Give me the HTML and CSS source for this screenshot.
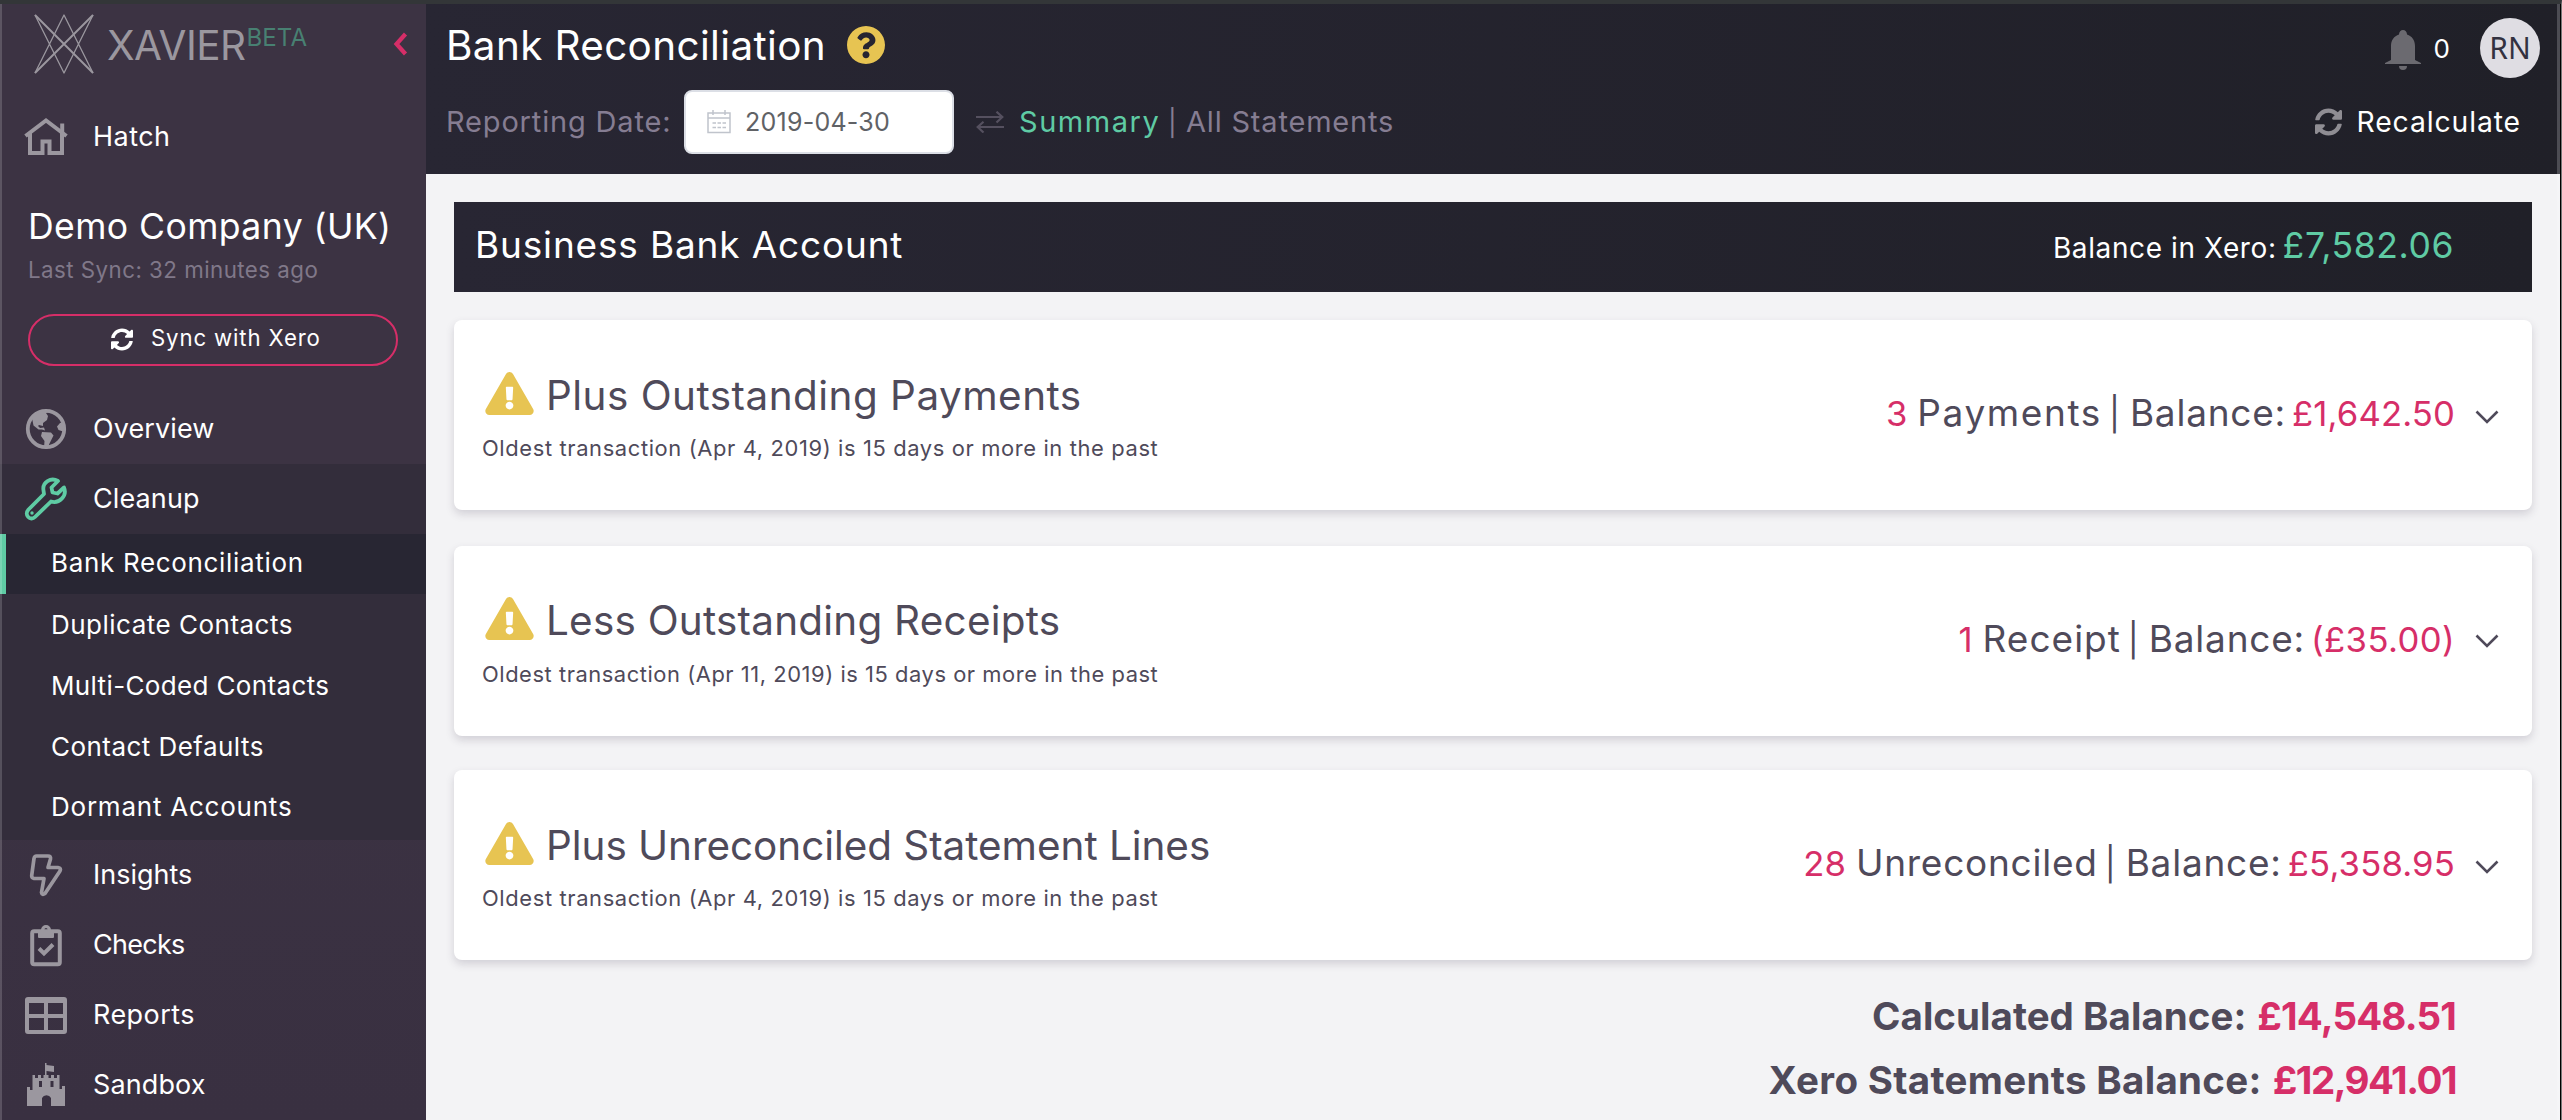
FILE: index.html
```html
<!DOCTYPE html>
<html lang="en">
<head>
<meta charset="utf-8">
<title>Bank Reconciliation</title>
<link rel="stylesheet" href="styles.css">
</head>
<body>
<svg class="defs" aria-hidden="true">
  <symbol id="sync" viewBox="8 8 496 496"><path d="M370.72 133.28C339.458 104.008 298.888 87.962 255.848 88c-77.458.068-144.328 53.178-162.791 126.85-1.344 5.363-6.122 9.15-11.651 9.15H24.103c-7.498 0-13.194-6.807-11.807-14.176C33.933 94.924 134.813 8 256 8c66.448 0 126.791 26.136 171.315 68.685L463.03 40.97C478.149 25.851 504 36.559 504 57.941V192c0 13.255-10.745 24-24 24H345.941c-21.382 0-32.09-25.851-16.971-40.971l41.75-41.749zM32 296h134.059c21.382 0 32.09 25.851 16.971 40.971l-41.75 41.75c31.262 29.273 71.835 45.319 114.876 45.28 77.418-.07 144.315-53.144 162.787-126.849 1.344-5.363 6.122-9.15 11.651-9.15h57.304c7.498 0 13.194 6.807 11.807 14.176C478.067 417.076 377.187 504 256 504c-66.448 0-126.791-26.136-171.315-68.685L48.97 471.03C33.851 486.149 8 475.441 8 454.059V320c0-13.255 10.745-24 24-24z"/></symbol>
  <symbol id="warn" viewBox="0 0 576 512"><path d="M569.517 440.013C587.975 472.007 564.806 512 527.94 512H48.054c-36.937 0-59.999-40.055-41.577-71.987L246.423 23.985c18.467-32.009 64.72-31.951 83.154 0l239.94 416.028zM288 354c-25.405 0-46 20.595-46 46s20.595 46 46 46 46-20.595 46-46-20.595-46-46-46zm-43.673-165.346l7.418 136c.347 6.364 5.609 11.346 11.982 11.346h48.546c6.373 0 11.635-4.982 11.982-11.346l7.418-136c.375-6.874-5.098-12.654-11.982-12.654h-63.383c-6.884 0-12.356 5.78-11.981 12.654z"/></symbol>
  <symbol id="down" viewBox="0 0 24 14"><path d="M1.5 1.5 12 12 22.500 1.500" fill="none" stroke="currentColor" stroke-width="2.600"/></symbol>
</svg>
<div class="app">
  <nav class="sidebar">
    <div class="brand">
      <svg class="logo" viewBox="0 0 60 60"><g fill="none" stroke="currentColor" stroke-linejoin="round"><path d="M1 1 59 59M59 1 1 59" stroke-width="1.900"/><path d="M1 1 30 59 59 1M1 59 30 1 59 59" stroke-width="1.300"/></g></svg>
      <span class="brand-name">XAVIER</span><span class="beta">BETA</span>
      <svg class="collapse" viewBox="0 0 14 24"><path d="M12 2 3 12l9 10" fill="none" stroke="currentColor" stroke-width="4.200"/></svg>
    </div>
    <a class="item home">
      <svg class="icon" viewBox="0 0 44 44"><g fill="none" stroke="currentColor" stroke-width="4"><path d="M1.500 21 22 5.500 42.500 21"/><path d="M6 18v20h12.500V26.500h7V38H38V18"/><path d="M38.200 20V8.500"/></g></svg>
      <span style="letter-spacing:.5px">Hatch</span>
    </a>
    <div class="company">
      <h2>Demo Company (UK)</h2>
      <p>Last Sync: 32 minutes ago</p>
      <button class="sync-button"><svg class="sync-icon"><use href="#sync"/></svg><span>Sync with Xero</span></button>
    </div>
    <a class="item">
      <svg class="icon" viewBox="0 0 44 44"><circle cx="22" cy="22" r="18.200" fill="none" stroke="currentColor" stroke-width="3.800"/><path fill="currentColor" d="M8 11C11 6 17 3 24 5l-2 1 2 3-1 4-4 3v3l-4-1-1 1 2 2 4-.5 1 3-3-1-3.500 0L9.500 18.500zM18 25l9 .5 2.500 3-2.500 5-2 4-1 4-4-.5.5-7-3.500-5zM40 15l-4 1-3 3.500 1.500 3.500 3 1 3 0z"/></svg>
      <span style="letter-spacing:.12px">Overview</span>
    </a>
    <div class="group">
      <a class="item active">
        <svg class="icon" viewBox="0 0 44 44"><path d="M34 4C27 0 18 5 19.500 13.500L20 17 4.500 32.500C-.5 38 6.500 44.500 11 40L27 24.500C35 27 43.500 19 40 10.500L33.500 16.500 28.500 15.500 27.500 10.500Z" fill="none" stroke="currentColor" stroke-width="3.800" stroke-linejoin="round"/><circle cx="8" cy="36" r="1.700" fill="currentColor"/></svg>
        <span style="letter-spacing:.13px">Cleanup</span>
      </a>
      <a class="sub current" style="letter-spacing:.67px">Bank Reconciliation</a>
      <div class="sub-list">
        <a class="sub" style="letter-spacing:.49px">Duplicate Contacts</a>
        <a class="sub" style="letter-spacing:.36px">Multi-Coded Contacts</a>
        <a class="sub" style="letter-spacing:.45px">Contact Defaults</a>
        <a class="sub" style="letter-spacing:.77px">Dormant Accounts</a>
      </div>
    </div>
    <a class="item">
      <svg class="icon" viewBox="0 0 44 44"><path d="M12.500 3h11.500q3 0 2.500 3L24 14.500h10q3.500.5 2 3.500L21 40.500q-3 2-3.500-1L20 25.500H10q-2.500-.5-2.300-3L10 5.500q.5-2.500 2.500-2.500z" fill="none" stroke="currentColor" stroke-width="3.700" stroke-linejoin="round"/></svg>
      <span>Insights</span>
    </a>
    <a class="item">
      <svg class="icon" viewBox="0 0 44 44"><rect x="8.200" y="8.200" width="27.600" height="33" rx="2" fill="none" stroke="currentColor" stroke-width="4"/><path fill="currentColor" fill-rule="evenodd" d="M14 7h3a5 5 0 0 1 10 0h3v7q0 1-1 1H15q-1 0-1-1zM22 4.900a1.600 1.600 0 1 0 0 3.200 1.600 1.600 0 0 0 0-3.200z"/><path d="m15 25.500 5 5 9-9" fill="none" stroke="currentColor" stroke-width="4"/></svg>
      <span style="letter-spacing:-.7px">Checks</span>
    </a>
    <a class="item">
      <svg class="icon" viewBox="0 0 44 44"><path fill="currentColor" fill-rule="evenodd" d="M4 4h36q3 0 3 3v31q0 3-3 3H4q-3 0-3-3V7q0-3 3-3zM5 10v11h15V10zM24 10v11h15V10zM5 25v12h15V25zM24 25v12h15V25z"/></svg>
      <span style="letter-spacing:.45px">Reports</span>
    </a>
    <a class="item">
      <svg class="icon" viewBox="0 0 44 44"><path fill="currentColor" fill-rule="evenodd" d="M21 12V0h1.500v2L30 3v6l-7.500-1v4h2v3h2.500v-3h3v3h3v-3h2.500v14h2.500v-3h3V43H27V35a5 5 0 0 0-9 0v8H3V24h3v3h2.500V12H11v3h3v-3h3v3h2.500v-3zM15 18v6h3v-6zM26.500 18v6h3v-6z"/></svg>
      <span style="letter-spacing:.15px">Sandbox</span>
    </a>
  </nav>

  <div class="page">
    <header class="header">
      <div class="title-row">
        <h1>Bank Reconciliation</h1>
        <svg class="help" viewBox="8 8 496 496"><path d="M504 256c0 136.997-111.043 248-248 248S8 392.997 8 256C8 119.083 119.043 8 256 8s248 111.083 248 248zM262.655 90c-54.497 0-89.255 22.957-116.549 63.758-3.536 5.286-2.353 12.415 2.715 16.258l34.699 26.31c5.205 3.947 12.621 3.008 16.665-2.122 17.864-22.658 30.113-35.797 57.303-35.797 20.429 0 45.698 13.148 45.698 32.958 0 14.976-12.363 22.667-32.534 33.976C247.128 238.528 216 254.941 216 296v4c0 6.627 5.373 12 12 12h56c6.627 0 12-5.373 12-12v-1.333c0-28.462 83.186-29.647 83.186-106.667 0-58.002-60.165-102-116.531-102zM256 338c-25.365 0-46 20.635-46 46 0 25.364 20.635 46 46 46s46-20.636 46-46c0-25.365-20.635-46-46-46z"/></svg>
        <div class="user">
          <svg class="bell" viewBox="0 0 36 40"><path fill="currentColor" d="M14 4.500a4 4.500 0 0 1 8 0c5 1.500 8 6 8 11.500V30l6 3v1H0v-1l6-3V16C6 10.500 9 6 14 4.500zM14 36h8a4 4 0 0 1-8 0z"/></svg>
          <span class="count">0</span>
          <span class="avatar">RN</span>
        </div>
      </div>
      <div class="filter-row">
        <label class="date-label">Reporting Date:</label>
        <div class="date-input">
          <svg class="calendar" viewBox="0 0 24 24"><g fill="none" stroke="currentColor" stroke-width="1.500"><path d="M1 3h22v19.500H1zM1 8h22M6 0v5M18 0v5"/><path d="M5.500 13H9M10.500 13H14M15.500 13H19M5.500 17.500H9M10.500 17.500H14M15.500 17.500H19"/></g></svg>
          <span>2019-04-30</span>
        </div>
        <svg class="swap" viewBox="0 0 28 22"><path d="M0 6h26M20.500 .7 26.300 6l-5.800 5.500M28 16H2M7.500 10.700 1.700 16l5.800 5.500" fill="none" stroke="currentColor" stroke-width="2.200"/></svg>
        <a class="summary">Summary</a><span class="bar">|</span><a class="all">All Statements</a>
        <div class="recalc"><svg class="recalc-icon"><use href="#sync"/></svg><span>Recalculate</span></div>
      </div>
    </header>

    <main class="main">
      <section class="account">
        <h2>Business Bank Account</h2>
        <div class="xero-balance"><span>Balance in Xero:</span><strong>£7,582.06</strong></div>
      </section>

      <section class="card">
        <div class="info">
          <h3><svg class="warn"><use href="#warn"/></svg><span style="letter-spacing:.49px">Plus Outstanding Payments</span></h3>
          <p>Oldest transaction (Apr 4, 2019) is 15 days or more in the past</p>
        </div>
        <div class="figures"><b class="n">3</b><span class="kind" style="letter-spacing:1.600px">Payments</span><i>|</i><span class="bal">Balance:</span><b class="amount" style="letter-spacing:.13px">£1,642.50</b></div>
        <svg class="down"><use href="#down"/></svg>
      </section>

      <section class="card second">
        <div class="info">
          <h3><svg class="warn"><use href="#warn"/></svg><span style="letter-spacing:.24px">Less Outstanding Receipts</span></h3>
          <p>Oldest transaction (Apr 11, 2019) is 15 days or more in the past</p>
        </div>
        <div class="figures"><b class="n">1</b><span class="kind" style="letter-spacing:1px">Receipt</span><i>|</i><span class="bal">Balance:</span><b class="amount" style="letter-spacing:.4px">(£35.00)</b></div>
        <svg class="down"><use href="#down"/></svg>
      </section>

      <section class="card third">
        <div class="info">
          <h3><svg class="warn"><use href="#warn"/></svg><span style="letter-spacing:-.03px">Plus Unreconciled Statement Lines</span></h3>
          <p>Oldest transaction (Apr 4, 2019) is 15 days or more in the past</p>
        </div>
        <div class="figures"><b class="n">28</b><span class="kind" style="letter-spacing:.75px">Unreconciled</span><i>|</i><span class="bal">Balance:</span><b class="amount" style="letter-spacing:.16px">£5,358.95</b></div>
        <svg class="down"><use href="#down"/></svg>
      </section>

      <div class="totals">
        <div><span style="letter-spacing:.03px">Calculated Balance:</span><b style="letter-spacing:-.86px">£14,548.51</b></div>
        <div><span style="letter-spacing:.31px">Xero Statements Balance:</span><b style="letter-spacing:-1.500px">£12,941.01</b></div>
      </div>
    </main>
  </div>
</div>
</body>
</html>
```
FILE: styles.css
```css
* { box-sizing: border-box; }
body { margin: 0; background: #f3f3f5; color: #4f4a5a; font-family: Inter, "Liberation Sans", sans-serif; }
h1, h2, h3, p { margin: 0; font-weight: 400; }
svg { display: block; flex: none; fill: currentColor; }
.defs { position: absolute; width: 0; height: 0; }

.app { position: relative; display: flex; width: 2562px; height: 1120px; overflow: hidden; border-top: 4px solid #333638; border-right: 1px solid #777; white-space: nowrap; }
.app::before { content: ""; position: absolute; z-index: 1; top: 0; bottom: 0; left: 0; width: 2px; background: rgba(255, 255, 255, .17); }
.app::after { content: ""; position: absolute; z-index: 1; top: 0; bottom: 0; right: 0; width: 3px; border-right: 1px solid #000; background: rgba(255, 255, 255, .2); }

.sidebar { flex: none; width: 426px; background: linear-gradient(#3c3343, #3c3343 45%, #393041); color: #fff; }
.brand { display: flex; align-items: center; height: 83px; padding: 0 18px 0 34px; color: #9b979f; }
.logo { width: 60px; height: 60px; margin: -3px 13px 0 0; }
.brand-name { font-size: 40.440px; letter-spacing: -.56px; }
.beta { margin: 0 auto 17px 1px; color: #488072; font-size: 24.070px; letter-spacing: .1px; }
.collapse { width: 15px; height: 24px; margin-top: -3px; color: #d62e68; }

.item { display: flex; align-items: center; height: 70px; padding-left: 24px; font-size: 26.960px; }
.item span { padding-bottom: 2px; }
.home { margin-top: 15px; }
.icon { width: 44px; height: 44px; margin-right: 25px; color: #9b979f; }
.company { padding: 33px 28px 0; }
.company h2 { font-size: 35.600px; line-height: 44px; letter-spacing: .42px; }
.company p { margin-top: 6px; color: #807889; font-size: 22.300px; line-height: 30px; letter-spacing: .47px; }
.sync-button { display: flex; align-items: center; width: 370px; height: 52px; margin: 29px 0 28px; padding: 0 0 0 81px; border: 2px solid #d62e68; border-radius: 26px; background: none; color: #fff; font: 400 22.200px Inter, "Liberation Sans", sans-serif; letter-spacing: .87px; }
.sync-button span { padding-bottom: 5px; }
.sync-icon { width: 22px; height: 23px; margin: -2px 18px 0 0; }
.group { background: #332d3b; }
.active .icon { color: #5fcba4; }
.sub { display: flex; align-items: center; height: 60.670px; padding: 0 0 3px 51px; font-size: 26px; }
.current { height: 60px; padding-left: 45px; border-left: 6px solid #5fcba4; background: #282633; }
.sub-list { height: 246px; padding-top: 2px; }

.page { flex: 1; }
.header { height: 170px; background: linear-gradient(90deg, #282633, #202028); color: #fff; }
.title-row { display: flex; align-items: center; height: 82px; padding: 0 21px 0 20px; }
.title-row h1 { width: 381px; font-size: 40.440px; letter-spacing: .37px; }
.help { width: 38px; height: 38px; margin-left: 20px; color: #e7c452; }
.user { display: flex; align-items: center; margin: 6px 0 0 auto; }
.bell { width: 36px; height: 40px; margin-top: 4px; color: #6b6a70; }
.count { margin: 1px 30px 0 13px; font-size: 26px; }
.avatar { width: 60px; height: 60px; border-radius: 50%; background: #dfdde3; color: #333140; font: 30px/60px "Noto Sans", sans-serif; text-align: center; }
.filter-row { display: flex; align-items: center; height: 64px; margin-top: 4px; padding-left: 20px; font-size: 29px; color: #857d92; }
.date-label, .summary, .all { padding-bottom: 1px; }
.date-label { width: 238px; letter-spacing: .83px; }
.date-input { display: flex; align-items: center; width: 270px; height: 64px; padding-left: 21px; border: 2px solid #dcdfe6; border-radius: 8px; background: #fff; color: #606266; font-size: 25.030px; letter-spacing: .24px; }
.calendar { width: 24px; height: 24px; margin-right: 14px; color: #c0c4cc; }
.swap { width: 28px; height: 22px; margin: 0 15px 0 22px; color: #55505f; }
.summary { width: 149px; color: #5fcba4; letter-spacing: 1.550px; }
.bar { width: 18px; font-size: 26px; }
.all { letter-spacing: .81px; }
.recalc { display: flex; align-items: center; margin: 0 40px 0 auto; color: #fff; font-size: 28.300px; letter-spacing: .9px; }
.recalc-icon { width: 27px; height: 28px; margin-right: 15px; color: #8f8d93; }

.main { padding: 28px 29px 0 28px; }
.account { display: flex; align-items: baseline; justify-content: space-between; height: 90px; padding: 21px 78px 0 21px; background: linear-gradient(90deg, #282633, #202028); color: #fff; }
.account h2 { font-size: 37px; line-height: 44px; letter-spacing: .83px; }
.xero-balance { font-size: 28px; letter-spacing: .6px; }
.xero-balance strong { margin-left: 6px; color: #5fcba4; font-size: 35.500px; font-weight: 400; letter-spacing: .6px; }

.card { display: flex; height: 190px; margin-top: 28px; padding: 0 33px 0 28px; border-radius: 8px; background: #fff; box-shadow: 0 4px 8px rgba(60, 50, 75, .18); }
.second { margin-top: 36px; }
.third { margin-top: 34px; }
.info { flex: 1; padding-top: 50px; }
.second .info { padding-top: 49px; }
.info h3 { display: flex; align-items: center; height: 50px; font-size: 40.440px; }
.warn { width: 49px; height: 43px; margin: -4px 12px 0 3px; color: #e7c452; }
.info p { margin-top: 13px; font-size: 21.900px; line-height: 30px; letter-spacing: .63px; }
.second .info p { margin-top: 14px; letter-spacing: .55px; }
.figures { display: flex; align-items: baseline; height: 190px; padding-top: 71px; font-size: 37px; line-height: 44px; }
.figures b { color: #d62e68; font-size: 34.660px; font-weight: 400; }
.figures .n { margin-right: 10px; }
.figures i { margin: 0 10px 0 7px; font-size: 33px; font-style: normal; }
.bal { margin-right: 6px; letter-spacing: .77px; }
.down { width: 24px; height: 14px; margin: 90px 0 0 20px; }
.second .down { margin-top: 88px; }

.totals { margin-top: 24px; padding-right: 76px; font-size: 38.500px; line-height: 64px; font-weight: 700; }
.totals div { display: flex; align-items: baseline; justify-content: flex-end; gap: 11px; }
.totals b { color: #d62e68; font-weight: 700; }
```
